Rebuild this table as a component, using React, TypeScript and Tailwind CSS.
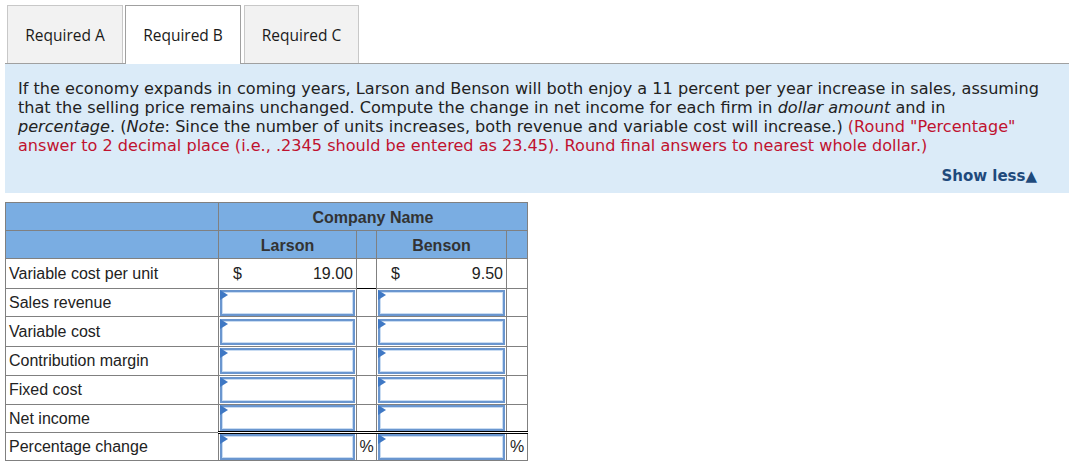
import React from 'react';

const rows = [
  { label: 'Sales revenue', top: 'black', h: 'h-[28px]' },
  { label: 'Variable cost', top: 'gray', h: 'h-[30px]' },
  { label: 'Contribution margin', top: 'black', h: 'h-[29px]' },
  { label: 'Fixed cost', top: 'gray', h: 'h-[29px]' },
  { label: 'Net income', top: 'black', h: 'h-[27px]' },
  { label: 'Percentage change', top: 'double', h: 'h-[28px]', pct: true },
];

const AnswerBox = () => (
  <div className="relative h-[26px] border-2 border-[#6a96cf] bg-white shadow-[inset_0_0_0_1px_#c9dcf2]">
    <svg className="absolute -left-[2px] -top-[2px]" width="8" height="10" viewBox="0 0 8 10">
      <polygon points="0,0 8,5 0,10" fill="#3f78c4" />
    </svg>
  </div>
);

const topBorder = (t: string) => {
  if (t === 'black') return 'border-t border-t-black';
  if (t === 'double') return 'border-t-[3px] border-double border-t-black';
  return 'border-t border-t-[#808080]';
};

export default function App() {
  return (
    <div className="w-[1071px] h-[467px] bg-white font-['DejaVu_Sans',Verdana,sans-serif] text-[#222]">
      {/* tabs */}
      <div className="flex items-end pl-[7px] pt-[5px]">
        <div className="w-[116px] h-[58px] pt-[2px] flex items-center justify-center bg-[#f2f2f2] border border-[#c8c8c8] border-b-0 text-[15.5px] text-[#1a1a1a] font-['Open_Sans',sans-serif]">
          Required A
        </div>
        <div className="ml-[2px] w-[116px] h-[59px] pt-[2px] -mb-px flex items-center justify-center bg-white border border-[#a0a0a0] border-b-0 text-[15.5px] text-[#1a1a1a] font-['Open_Sans',sans-serif] relative z-10">
          Required B
        </div>
        <div className="ml-[3px] w-[115px] h-[58px] pt-[2px] flex items-center justify-center bg-[#f2f2f2] border border-[#c8c8c8] border-b-0 text-[15.5px] text-[#1a1a1a] font-['Open_Sans',sans-serif]">
          Required C
        </div>
      </div>

      {/* question panel */}
      <div className="ml-[5px] w-[1064px] border-t border-[#a0a0a0] bg-[#dbebf8] pl-[13px] pt-[15px] pb-[8px]">
        <p className="text-[16.1px] leading-[19px] text-[#222] whitespace-nowrap">
          If the economy expands in coming years, Larson and Benson will both enjoy a 11 percent per year increase in sales, assuming
          <br />
          that the selling price remains unchanged. Compute the change in net income for each firm in <i>dollar amount</i> and in
          <br />
          <i>percentage</i>. (<i>Note</i>: Since the number of units increases, both revenue and variable cost will increase.){' '}
          <span className="text-[#c0122f]">(Round "Percentage"</span>
          <br />
          <span className="text-[#c0122f]">
            answer to 2 decimal place (i.e., .2345 should be entered as 23.45). Round final answers to nearest whole dollar.)
          </span>
        </p>
        <div className="mt-[12px] flex justify-end pr-[32px]">
          <span className="text-[15px] font-bold text-[#1f4a7c] leading-[18px]">
            Show less<span className="text-[15px]">▲</span>
          </span>
        </div>
      </div>

      {/* table */}
      <table className="ml-[5px] mt-[9px] border-collapse font-['Liberation_Sans',Arial,sans-serif] text-[16px] text-[#222]">
        <colgroup>
          <col className="w-[213px]" />
          <col className="w-[138px]" />
          <col className="w-[20px]" />
          <col className="w-[130px]" />
          <col className="w-[21px]" />
        </colgroup>
        <thead>
          <tr className="h-[28px] bg-[#7aade2]">
            <th className="border border-[#808080]"></th>
            <th colSpan={4} className="border border-[#808080] pt-[2px] text-center font-bold text-[#333]">Company Name</th>
          </tr>
          <tr className="h-[28px] bg-[#7aade2]">
            <th className="border border-[#808080]"></th>
            <th className="border border-[#808080] pt-[2px] text-center font-bold text-[#333]">Larson</th>
            <th className="border border-[#808080]"></th>
            <th className="border border-[#808080] pt-[2px] text-center font-bold text-[#333]">Benson</th>
            <th className="border border-[#808080]"></th>
          </tr>
        </thead>
        <tbody>
          <tr className="h-[30px]">
            <td className="border border-[#808080] px-[3px]">Variable cost per unit</td>
            <td className="border border-[#808080] px-[3px]">
              <div className="flex justify-between pl-[11px]">
                <span>$</span>
                <span>19.00</span>
              </div>
            </td>
            <td className="border-t border-[#808080]"></td>
            <td className="border border-[#808080] px-[3px]">
              <div className="flex justify-between pl-[11px]">
                <span>$</span>
                <span>9.50</span>
              </div>
            </td>
            <td className="border border-[#808080]"></td>
          </tr>
          {rows.map((r, i) => (
            <tr key={r.label} className={r.h}>
              <td className="border border-[#808080] px-[3px]">{r.label}</td>
              <td className={`border-x border-b border-x-[#808080] border-b-[#808080] p-0 px-px ${topBorder(r.top)}`}>
                <AnswerBox />
              </td>
              <td className={`border-b border-b-[#808080] p-0 text-center ${topBorder(r.top)}`}>
                {r.pct ? '%' : ''}
              </td>
              <td className={`border-x border-b border-x-[#808080] border-b-[#808080] p-0 px-px ${topBorder(r.top)}`}>
                <AnswerBox />
              </td>
              <td className={`border border-[#808080] p-0 text-center ${i === 0 ? '' : topBorder(r.top)}`}>
                {r.pct ? '%' : ''}
              </td>
            </tr>
          ))}
        </tbody>
      </table>
    </div>
  );
}
